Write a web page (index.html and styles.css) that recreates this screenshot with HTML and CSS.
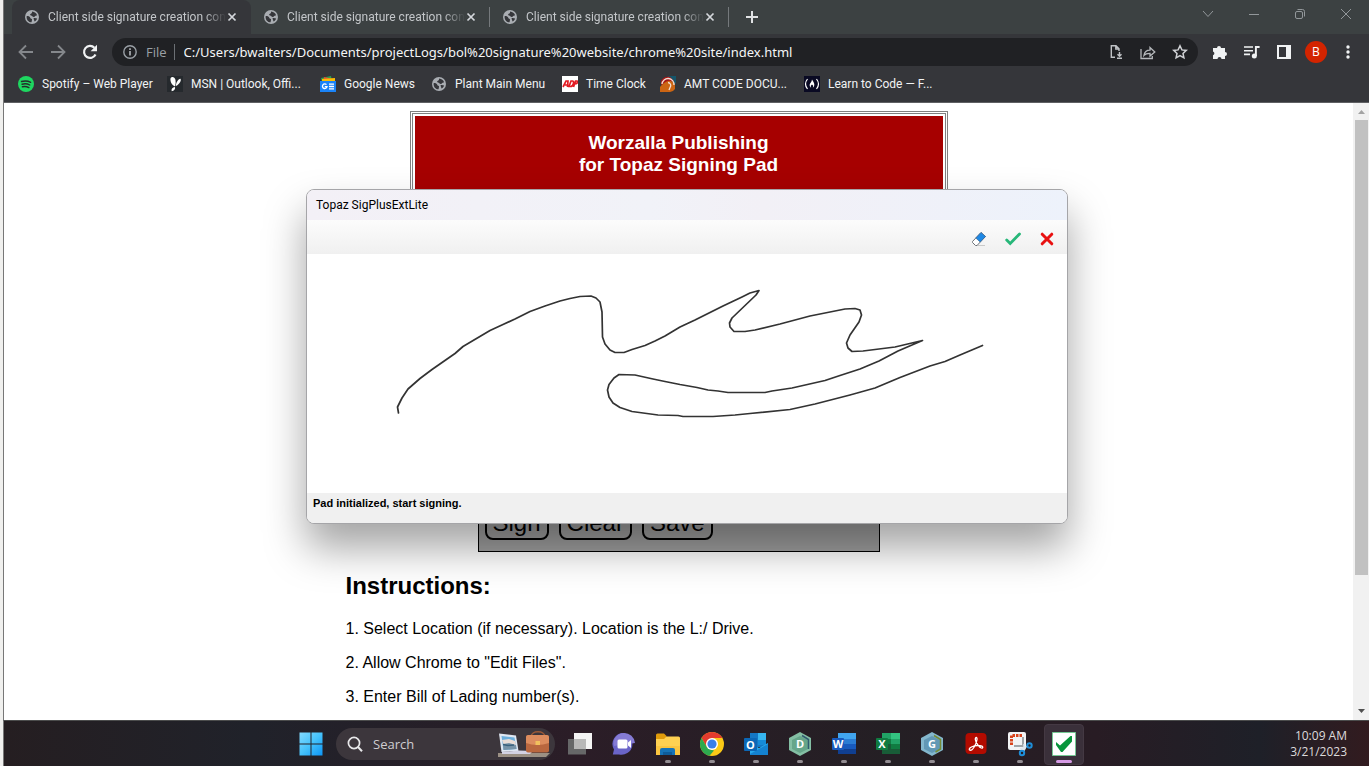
FILE: index.html
```html
<!DOCTYPE html>
<html lang="en">
<head>
<meta charset="utf-8">
<title>Client side signature creation con</title>
<link rel="stylesheet" href="styles.css">
</head>
<body>
<svg class="defs" aria-hidden="true">
  <symbol id="globe" viewBox="0 0 14 14"><circle cx="7" cy="7" r="7" fill="#a9adb2"/><path d="M1.600 6.200c1.200-.6 2.400-.2 3.200.7.6.8.4 1.500 1.500 1.800.9.300.9 1.200.500 2.100l-.200 1.500C3.500 12.300 1.400 9.800 1.600 6.200zM7.200 1.500c2.500.2 4.200 1.700 4.900 3.700-.9.500-1.900.4-2.400 1.300-.5.900-1.800.5-2.400-.2-.7-.8-2-.5-2.200-1.500-.1-.8 1-1 1.600-1.500.5-.5.100-1.200.5-1.800zM8.500 8.300c1.200-.4 2.500-.1 3.600.3-.4 1.300-1.300 2.300-2.500 2.900-.3-1-.9-2-1.100-3.200z" fill="#35363a"/></symbol>
  <symbol id="cross" viewBox="0 0 10 10"><path d="M1.500 1.500l7 7M8.500 1.500l-7 7" stroke="#d5d8dc" stroke-width="1.700" fill="none"/></symbol>
</svg>
<div class="desktop">
  <div class="browser">
    <div class="tabstrip">
      <div class="tab tab-active"><svg class="fav"><use href="#globe"/></svg><span class="tab-title">Client side signature creation con</span><button class="tab-close" aria-label="Close tab"><svg width="10" height="10"><use href="#cross"/></svg></button></div>
      <div class="tab"><svg class="fav"><use href="#globe"/></svg><span class="tab-title">Client side signature creation con</span><button class="tab-close" aria-label="Close tab"><svg width="10" height="10"><use href="#cross"/></svg></button></div>
      <div class="tab"><svg class="fav"><use href="#globe"/></svg><span class="tab-title">Client side signature creation con</span><button class="tab-close" aria-label="Close tab"><svg width="10" height="10"><use href="#cross"/></svg></button></div>
      <button class="new-tab" aria-label="New tab"><svg width="12" height="12" viewBox="0 0 12 12"><path d="M6 0v12M0 6h12" stroke="#e0e2e4" stroke-width="2"/></svg></button>
      <div class="window-controls">
        <button aria-label="Search tabs"><svg width="12" height="12" viewBox="0 0 12 12"><path d="M1 3l5 5.500L11 3"/></svg></button>
        <button aria-label="Minimize"><svg width="12" height="12" viewBox="0 0 12 12"><path d="M1 6.500h10"/></svg></button>
        <button aria-label="Restore"><svg width="12" height="12" viewBox="0 0 12 12"><rect x="1.500" y="3.500" width="7" height="7" rx="1.500"/><path d="M3.500 1.500h5a2 2 0 0 1 2 2v5"/></svg></button>
        <button aria-label="Close"><svg width="12" height="12" viewBox="0 0 12 12"><path d="M1 1l10 10M11 1L1 11"/></svg></button>
      </div>
    </div>

    <div class="toolbar">
      <button class="nav" aria-label="Back"><svg width="16" height="16" viewBox="0 0 16 16"><path d="M15 8H2M8 1.500L1.500 8 8 14.500" fill="none" stroke="#85888c" stroke-width="1.800"/></svg></button>
      <button class="nav" aria-label="Forward"><svg width="16" height="16" viewBox="0 0 16 16"><path d="M1 8h13M8 1.500L14.500 8 8 14.500" fill="none" stroke="#85888c" stroke-width="1.800"/></svg></button>
      <button class="nav" aria-label="Reload"><svg width="16" height="16" viewBox="0 0 16 16"><path d="M13.500 10.500A6 6 0 1 1 12.400 3.800" fill="none" stroke="#f1f3f4" stroke-width="2.200"/><path d="M15 .8v6.400H8.600z" fill="#f1f3f4"/></svg></button>
      <div class="omnibox">
        <svg width="14" height="14" viewBox="0 0 14 14"><circle cx="7" cy="7" r="6.200" fill="none" stroke="#9aa0a6" stroke-width="1.400"/><path d="M7 6v4.500M7 3.300v1.600" stroke="#b5b9bd" stroke-width="1.600"/></svg>
        <span class="scheme">File</span>
        <input class="url" type="text" aria-label="Address" value="C:/Users/bwalters/Documents/projectLogs/bol%20signature%20website/chrome%20site/index.html">
        <div class="omni-actions">
          <button aria-label="Install"><svg width="16" height="16" viewBox="0 0 16 16" fill="none" stroke="#c0c3c6" stroke-width="1.400"><path d="M7 13.300H3.300V1.700h4.700l3 3V7M7.800 1.700V5H11M11.500 8v4M9.500 10.300l2 1.900 2-1.900M9 14.300h5"/></svg></button>
          <button aria-label="Share"><svg width="16" height="16" viewBox="0 0 16 16" fill="none" stroke="#b5b8bb" stroke-width="1.300"><path d="M1 5v9.500h11.300V12M4 11.300c.5-3.500 2.300-5.100 6-5.100V3.500L14.800 8 10 12V9.300c-3 0-4.800.5-6 2z"/></svg></button>
          <button aria-label="Bookmark"><svg width="16" height="16" viewBox="0 0 16 16"><path d="M8 1.800l1.900 4.100 4.400.5-3.300 3 .9 4.400L8 11.600l-3.900 2.200.9-4.400-3.300-3 4.400-.5z" fill="none" stroke="#d0d2d5" stroke-width="1.500"/></svg></button>
        </div>
      </div>
      <div class="extensions">
        <button aria-label="Extensions"><svg width="16" height="16" viewBox="0 0 16 16"><path d="M1 4h4a2 2 0 1 1 4 0h4v4a2 2 0 1 1 0 4v3H9.500a2 2 0 0 0-4 0H1v-3.800a2 2 0 0 0 0-3.800z" fill="#f1f3f4"/></svg></button>
        <button aria-label="Media"><svg width="18" height="16" viewBox="0 0 18 16"><path d="M1 3h9M1 6.700h9M1 10.400h6" stroke="#f1f3f4" stroke-width="1.600"/><path d="M12.900 12V3h3.700" fill="none" stroke="#f1f3f4" stroke-width="1.900"/><circle cx="11.300" cy="12" r="2.500" fill="#f1f3f4"/></svg></button>
        <button aria-label="Side panel"><svg width="14" height="14" viewBox="0 0 14 14"><path fill-rule="evenodd" d="M0 0h14v14H0zM2 2v10h7V2z" fill="#f1f3f4"/></svg></button>
        <button class="avatar" aria-label="Profile">B</button>
        <button aria-label="Menu"><svg width="4" height="14" viewBox="0 0 4 14" fill="#f1f3f4"><circle cx="2" cy="2" r="1.700"/><circle cx="2" cy="7" r="1.700"/><circle cx="2" cy="12" r="1.700"/></svg></button>
      </div>
    </div>

    <nav class="bookmarks">
      <a href="#"><svg viewBox="0 0 16 16"><circle cx="8" cy="8" r="8" fill="#1ed760"/><path d="M3.500 5.500q5-1.400 9.200.8M4 8.200q4.300-1.100 7.800.8M4.400 10.800q3.500-.8 6.500.8" fill="none" stroke="#252c2a" stroke-width="1.400" stroke-linecap="round"/></svg>Spotify – Web Player</a>
      <a href="#"><svg viewBox="0 0 16 16"><path d="M0 0h16v16H0z" fill="#25292d"/><path d="M8 10.500C4.500 9 3 5 3.500 2.500 4.200.2 7.800.5 8.500 4q.6 3-.5 6.500zM8.800 10c.2-3.500 2.500-7.600 4.700-7.300 1.200 2-1.200 5.800-4.700 7.300zM8 11c.6 2-.9 3.700-3.300 4.300C4 13.400 5.200 11.300 8 11z" fill="#fff"/></svg>MSN | Outlook, Offi...</a>
      <a href="#"><svg viewBox="0 0 16 16"><path d="M1 2l10-2 1 6H2z" fill="#2ba24c"/><path d="M4 1l9 2v5H3z" fill="#ea4335"/><path d="M2 3l13-1v6H2z" fill="#fbbc04"/><path d="M0 5h16v11H0z" fill="#1a83f7"/><path d="M6.500 8.700A2.300 2.300 0 1 0 7 10.700H4.800M9 8.200h5M9 10.500h5M9 12.800h5" fill="none" stroke="#fff" stroke-width="1.300"/></svg>Google News</a>
      <a href="#"><svg viewBox="-1 -1 16 16"><use href="#globe" width="14" height="14"/></svg>Plant Main Menu</a>
      <a href="#"><svg viewBox="0 0 16 16"><path d="M0 0h16v16H0z" fill="#fff"/><path d="M1 11L4 5h2l-.5 6M3 9h3M7 10.500L9 5h1.500c2 0 1 5.500-2 5.500zM11.500 11l2-6H15c1.500 1 0 3-2.500 3" fill="none" stroke="#e31b23" stroke-width="1.700"/></svg>Time Clock</a>
      <a href="#"><svg viewBox="0 0 16 16"><path d="M8 0h8v8z" fill="#15556a"/><path d="M1 9V5c1-3 5-5 9-4l4 4z" fill="#a51717"/><path d="M0 11q4-5 8-6t7 4v4q-2 3-5 3H0z" fill="#cc6513"/><path d="M2 8a6 6 0 0 1 12 1M8 6.500a3 3 0 0 1 2 5l-1 2.500" fill="none" stroke="#f2dfd3" stroke-width="1.300"/></svg>AMT CODE DOCU...</a>
      <a href="#"><svg viewBox="0 0 16 16"><path d="M0 0h16v16H0z" fill="#0a0a23"/><path d="M3.500 3q-4 5 0 10M12.500 3q4 5 0 10" fill="none" stroke="#fff" stroke-width="1.200"/><path d="M8 3.500c1 2 2.300 3 2.300 5s-.8 2.800-1.500 3c.8-1.500.4-2-.8-3-1.200 1-1.600 1.500-.8 3-1-.2-1.700-1.300-1.500-3C6 7 7.700 6 8 3.500z" fill="#fff"/></svg>Learn to Code — F...</a>
    </nav>

    <div class="viewport">
      <main class="page">
        <header class="banner"><h1>Worzalla Publishing<br>for Topaz Signing Pad</h1></header>
        <section class="pad">
          <button>Sign</button>
          <button>Clear</button>
          <button>Save</button>
        </section>
        <section class="instructions">
          <h2>Instructions:</h2>
          <p>1. Select Location (if necessary). Location is the L:/ Drive.</p>
          <p>2. Allow Chrome to "Edit Files".</p>
          <p>3. Enter Bill of Lading number(s).</p>
        </section>
      </main>
      <div class="scrollbar">
        <svg width="7" height="4" viewBox="0 0 7 4"><path d="M0 4L3.500 0 7 4z" fill="#a3a3a3"/></svg>
        <div class="track"><div class="thumb"></div></div>
        <svg width="7" height="4" viewBox="0 0 7 4"><path d="M0 0h7L3.500 4z" fill="#505050"/></svg>
      </div>
    </div>
  </div>

  <section class="dialog" role="dialog" aria-label="Topaz SigPlusExtLite">
    <div class="dialog-title">Topaz SigPlusExtLite</div>
    <div class="dialog-tools">
      <button aria-label="Erase"><svg width="16" height="16" viewBox="0 0 16 16"><path d="M5 14.500h9" stroke="#c9c9c9"/><path d="M1.500 10.500L10 1.500l4.500 4-8.500 9H4.500l-3-3z" fill="#fff" stroke="#6b7076"/><path d="M4.800 7L10 1.500l4.500 4L9.200 11z" fill="#1e88e5" stroke="#3a6796" stroke-width=".7"/></svg></button>
      <button aria-label="Accept"><svg width="16" height="16" viewBox="0 0 16 16"><path d="M1.700 9l3.500 3.500L14.500 3" fill="none" stroke="#27b779" stroke-width="2.800" stroke-linecap="round"/></svg></button>
      <button aria-label="Cancel"><svg width="16" height="16" viewBox="0 0 16 16"><path d="M3.200 3.200l9.600 9.600M12.800 3.200l-9.600 9.600" stroke="#e81111" stroke-width="3" stroke-linecap="round"/></svg></button>
    </div>
    <svg class="signature" viewBox="307 254 760 239" role="img" aria-label="Signature"><polyline fill="none" stroke="#333" stroke-width="1.700" stroke-linejoin="round" stroke-linecap="round" points="398.500,413 397.500,407 402,398 408,389 420,378.500 432,369.500 455,353.500 463,346.500 490,330.500 503,324.500 515,319 530,311.500 545,306 560,301 570,298.500 580,296.500 591,296 596,298 600,302 602,312 602.500,337 605,344 610,350 615,352.500 624,352.500 632,349.500 645,345.500 655,341 665,336 680,327 695,320 723,306 742,297 750,293 759,290.500 756,295 732,318 729.500,323 730,327 734,331.500 745,331.500 755,330 780,324 810,316 845,309 855,308.500 860,310 861.500,315 859,322 850,335 846.500,343 848,348 852,351.500 863,351 895,347 922.500,340.500 898,351 879,361 860,369 840,375.500 825,380.500 792,388 772,391 765,392.500 728,392.500 718,391 708,390 697,387.500 680,384.500 665,381.500 653,379 635,375 619,374.500 614,378 609,384.500 607.500,390 609,397 613,403 620,407.500 632,411.500 658,415 678,415.500 683,416.500 713,416.500 735,415 750,413.500 790,409.500 815,404 850,395 875,388 900,377.500 930,366 945,361.500 960,355 982.500,345.500"/></svg>
    <div class="dialog-status">Pad initialized, start signing.</div>
  </section>

  <footer class="taskbar">
    <div class="apps">
      <button class="app" aria-label="Start"><svg width="24" height="24" viewBox="0 0 24 24"><defs><linearGradient id="w" gradientUnits="userSpaceOnUse" x1="0" y1="0" x2="24" y2="24"><stop stop-color="#86dcff"/><stop offset=".5" stop-color="#45c2fb"/><stop offset="1" stop-color="#0a93f5"/></linearGradient></defs><path d="M.5 .5h11v11H.5zM12.500 .5h11v11h-11zM.5 12.500h11v11H.5zM12.500 12.500h11v11h-11z" fill="url(#w)"/></svg></button>
      <label class="search">
        <svg width="16" height="16" viewBox="0 0 16 16"><circle cx="7" cy="7" r="5.600" fill="none" stroke="#e8e8ea" stroke-width="1.700"/><path d="M11 11l4 4.200" stroke="#e8e8ea" stroke-width="2"/></svg>
        <input type="text" placeholder="Search" aria-label="Search">
        <svg width="54" height="28" viewBox="0 0 54 28"><path d="M1 23h52l-4 4H1z" fill="#9b9084"/><path d="M2 3.500l17 2 2.500 15.500-17 1z" fill="#dfe7f2"/><path d="M4.500 6l13 1.500 2 11.500-13 1z" fill="#6caedb"/><path d="M5 10l7-1 6 2 1 4-12 1z" fill="#e9dcd6"/><path d="M6 14l6-1 7 2 .5 4-13 1z" fill="#7793a8"/><path d="M6 14.500l5 1 6-.5" fill="none" stroke="#39617d" stroke-width="1.500"/><path d="M5 22l17-1.500 14 .5-3 3H5z" fill="#d3d2e3"/><path d="M34 7c0-7 14-7 14 0" fill="none" stroke="#9c5a37" stroke-width="1.500"/><rect x="29" y="5.500" width="23" height="17" rx="2" fill="#b9673f"/><path d="M29 7q0-2 2-2h19q2 0 2 2v6q-12 4-23 0z" fill="#dc8c5e"/><rect x="38.500" y="11" width="4.500" height="4" fill="#f2c05d"/></svg>
      </label>
      <button class="app" aria-label="Task view"><svg width="24" height="24" viewBox="0 0 24 24"><path d="M6 1h18v16H6z" fill="#f4f4f4"/><path d="M0 7h18v15.500H0z" fill="#666768"/><path d="M6 7h12v10H6z" fill="#b8b8b8"/></svg></button>
      <button class="app" aria-label="Chat"><svg width="24" height="24" viewBox="0 0 24 24"><path d="M12 1A11 11 0 1 1 7 22.500H.8l1.200-5A11 11 0 0 1 12 1z" fill="#6a64c8"/><path d="M12 1a11 11 0 0 1 11 10L2 14C0 8 5 1 12 1z" fill="#857bd4"/><rect x="5.500" y="7.500" width="10" height="9" rx="1.500" fill="#fff"/><path d="M16 10.500l3-2.500v8l-3-2.500z" fill="#fff"/></svg></button>
      <button class="app running" aria-label="File Explorer"><svg width="24" height="24" viewBox="0 0 24 24"><path d="M0 5V3q0-1.500 1.500-1.500H8L10.500 4v4H0z" fill="#e09b0b"/><path d="M0 7h8l2.500-2.500h12Q24 4.500 24 6v17H0z" fill="#ffd152"/><path d="M0 14h24v9H0z" fill="#fbc540"/><path d="M4 23v-5q0-2 2-2h11q2 0 2 2v5z" fill="#1673b8"/><path d="M7 20h9v3H7z" fill="#0e5c9b"/></svg></button>
      <button class="app running" aria-label="Chrome"><svg width="24" height="24" viewBox="0 0 24 24"><circle cx="12" cy="12" r="12" fill="#fbc916"/><path d="M1.600 6A12 12 0 0 1 22.400 6H12L6.800 15z" fill="#e33b2e"/><path d="M1.600 6l5.200 9L12 18l2 .5-4.500 5.300A12 12 0 0 1 1.600 6z" fill="#2da94f"/><circle cx="12" cy="12" r="6" fill="#fff"/><circle cx="12" cy="12" r="4.600" fill="#397ee8"/></svg></button>
      <button class="app running" aria-label="Outlook"><svg width="24" height="24" viewBox="0 0 24 24"><path d="M6 1h16v14H6z" fill="#1477c4"/><path d="M14 1h8v7h-8z" fill="#36b5ef"/><path d="M14 8h8v5h-8z" fill="#168bd8"/><path d="M6 11l9 5 9-5v12H6z" fill="#28a8ea"/><path d="M6 22l18-10v11H6z" fill="#1482d1"/><rect y="6" width="13" height="13" rx="1" fill="#0b67b6"/><text x="6.500" y="16.500" class="glyph">O</text></svg></button>
      <button class="app running" aria-label="Designer"><svg width="24" height="24" viewBox="0 0 24 24"><path d="M12 0l11 6v12l-11 6-11-6V6z" fill="#84bfa4"/><path d="M12 4l8 4v9l-8 4-8-4V8z" fill="#66a68a"/><path d="M14 3.500l6.500 4V17" fill="none" stroke="#315b70" stroke-width="1.500"/><text x="12" y="16" class="glyph">D</text></svg></button>
      <button class="app running" aria-label="Word"><svg width="24" height="24" viewBox="0 0 24 24"><path d="M6 1h18v6H6z" fill="#41a5ee"/><path d="M6 7h18v5H6z" fill="#2b7cd3"/><path d="M6 12h18v5H6z" fill="#185abd"/><path d="M6 17h18v5H6z" fill="#103f91"/><rect y="6" width="12" height="12" rx="1" fill="#185abd"/><text x="6" y="16" class="glyph">W</text></svg></button>
      <button class="app running" aria-label="Excel"><svg width="24" height="24" viewBox="0 0 24 24"><path d="M6 1h18v21H6z" fill="#21a366"/><path d="M15 1h9v6h-9z" fill="#33c481"/><path d="M6 7h9v5H6z" fill="#107c41"/><path d="M6 12h9v10H6z" fill="#185c37"/><path d="M15 12h9v5h-9z" fill="#107c41"/><path d="M15 17h9v5h-9z" fill="#185c37"/><rect y="6" width="12" height="12" rx="1" fill="#107c41"/><text x="6" y="16" class="glyph">X</text></svg></button>
      <button class="app running" aria-label="G app"><svg width="24" height="24" viewBox="0 0 24 24"><path d="M12 0l11 6v12l-11 6-11-6V6z" fill="#84b7cd"/><path d="M12 4l8 4v9l-8 4-8-4V8z" fill="#6298b5"/><path d="M14 3.500l6.500 4V17l-5 3" fill="none" stroke="#758b35" stroke-width="1.500"/><text x="12" y="16" class="glyph">G</text></svg></button>
      <button class="app running" aria-label="Acrobat"><svg width="24" height="24" viewBox="0 0 24 24"><rect x="1.500" y="1" width="21" height="21" rx="4" fill="#b30b00"/><path d="M5.500 18c-1.500-2 4-4.500 8-4.500s6 1 5 2.300c-1.600 2-7-5-7.200-8.300-.1-2.700 2-2.700 1.700 0-.3 3.300-4.300 12.500-7.500 10.500z" fill="none" stroke="#fff" stroke-width="1.300"/></svg></button>
      <button class="app running" aria-label="Snipping Tool"><svg width="24" height="24" viewBox="0 0 24 24"><rect width="18" height="18" rx="2" fill="#f2f3f5"/><path d="M3.500 13V3.500H14" fill="none" stroke="#d9431b" stroke-width="3" stroke-dasharray="2.500 1"/><path d="M6 14h9V5" fill="none" stroke="#a0a4a8" stroke-width="2"/><path d="M12 17l8-3M16 12v7" stroke="#dce5ee" stroke-width="1.500"/><circle cx="21.500" cy="13.500" r="2.200" fill="none" stroke="#1e8ed8" stroke-width="2"/><circle cx="14" cy="21" r="2.200" fill="none" stroke="#1e8ed8" stroke-width="2"/></svg></button>
      <button class="app running current" aria-label="Topaz SigPlusExtLite"><svg width="24" height="24" viewBox="0 0 24 24"><path d="M.5 .5h23v23H.5z" fill="#fff" stroke="#75c994"/><path d="M4 10l4 3.500L18.500 4H20v5.500L10.500 20H9l-5-7z" fill="#07953b"/></svg></button>
    </div>
    <div class="clock"><time>10:09 AM</time><time>3/21/2023</time></div>
  </footer>
</div>
</body>
</html>
```

FILE: styles.css
```css
* { box-sizing: border-box; }

body {
  margin: 0;
  font: 12px/16px "Open Sans", "Noto Sans", sans-serif;
}

button {
  padding: 0;
  border: 0;
  background: none;
  color: inherit;
  font: inherit;
  display: flex;
  align-items: center;
  justify-content: center;
}

svg { flex: none; display: block; }
.defs { position: absolute; width: 0; height: 0; }

.desktop {
  position: relative;
  height: 100vh;
  display: flex;
  flex-direction: column;
  overflow: hidden;
  border-left: 3px solid #f0f0ee;
}

.browser {
  flex: 1;
  min-height: 0;
  display: flex;
  flex-direction: column;
  border-left: 1px solid #777;
  background: #35363a;
  color: #f1f3f4;
}

/* Tabs */
.tabstrip {
  flex: none;
  display: flex;
  height: 34px;
  padding-left: 8px;
  background: #3c4142;
}
.tab {
  position: relative;
  flex: 0 1 239px;
  min-width: 0;
  display: flex;
  align-items: center;
  gap: 9px;
  padding: 0 10px 0 13px;
  color: #c3c6c9;
  font-family: Roboto, "Open Sans", sans-serif;
}
.tab-active {
  background: #35363a;
  border-radius: 8px 8px 0 0;
}
.tab:not(.tab-active)::after {
  content: "";
  position: absolute;
  right: 0;
  top: 7px;
  width: 1px;
  height: 20px;
  background: #75797c;
}
.fav { width: 14px; height: 14px; }
.tab-title {
  flex: 1;
  white-space: nowrap;
  -webkit-mask-image: linear-gradient(90deg, #000 88%, transparent);
  mask-image: linear-gradient(90deg, #000 88%, transparent);
}
.tab-close { margin: 0 4px 0 -8px; }
.new-tab { width: 46px; }
.window-controls { margin-left: auto; display: flex; height: 28px; }
.window-controls button { width: 46px; }
.window-controls svg { fill: none; stroke: #92979a; }

/* Toolbar */
.toolbar {
  flex: none;
  display: flex;
  align-items: center;
  height: 36px;
  padding: 0 5px 0 6px;
}
.nav { width: 32px; height: 28px; }
.omnibox {
  flex: 1;
  display: flex;
  align-items: center;
  height: 28px;
  margin: 0 6px;
  padding: 0 2px 0 11px;
  border-radius: 14px;
  background: #202124;
}
.scheme {
  margin-left: 9px;
  padding-right: 7px;
  border-right: 1px solid #6c7074;
  color: #9aa0a6;
  font-size: 13px;
}
.url {
  flex: 1;
  min-width: 0;
  padding: 0 0 0 9px;
  border: 0;
  background: none;
  color: #f4f5f6;
  font: 13px/20px "Noto Sans", "Open Sans", sans-serif;
}
.omni-actions, .extensions { display: flex; }
.omni-actions button, .extensions button { width: 32px; height: 28px; }
.extensions .avatar {
  width: 22px;
  height: 22px;
  margin: 3px 5px;
  border-radius: 50%;
  background: #d32400;
  color: #fff;
}

/* Bookmarks */
.bookmarks {
  flex: none;
  display: grid;
  grid-template-columns: 149px 153px 111px 131px 98px 144px auto;
  align-items: center;
  height: 33px;
  padding: 0 14px 4px;
  border-bottom: 1px solid #5f6063;
  font-family: Roboto, "Open Sans", sans-serif;
}
.bookmarks a {
  display: flex;
  align-items: center;
  gap: 8px;
  color: inherit;
  text-decoration: none;
  white-space: nowrap;
}
.bookmarks svg { width: 16px; height: 16px; }

/* Page */
.viewport {
  flex: 1;
  min-height: 0;
  display: flex;
  background: #fff;
  color: #000;
}
.page {
  flex: 1;
  overflow: hidden;
  padding-top: 8px;
  font: 16px/18px "Liberation Sans", Arial, sans-serif;
}
.banner {
  max-width: 538px;
  height: 110px;
  margin: 0 auto;
  padding: 2px;
  border: 3px double #808080;
}
.banner h1 {
  height: 100%;
  margin: 0;
  padding-top: 16px;
  background: #a60000;
  color: #fff;
  font-size: 19px;
  line-height: 22px;
  text-align: center;
}
.pad {
  display: flex;
  align-items: flex-end;
  gap: 10px;
  max-width: 402px;
  height: 321px;
  margin: 10px auto 0;
  padding: 0 6px 11px;
  border: 1px solid #000;
  background: #a0a0a0;
}
.pad button {
  padding: 1px 6px;
  border: 2px solid #000;
  border-radius: 8px;
  font-size: 24px;
  line-height: 28px;
}
.instructions { max-width: 666px; margin: 0 auto; }
.instructions h2 { margin: 20px 0; font-size: 24px; line-height: 28px; }
.instructions p { margin: 0 0 16px; }

.scrollbar {
  flex: 0 0 16px;
  display: flex;
  flex-direction: column;
  align-items: center;
  gap: 6px;
  padding: 7px 0;
  background: #f1f1f1;
}
.track { flex: 1; width: 13px; }
.thumb { height: 78%; background: #c1c1c1; }

/* Signature window */
.dialog {
  position: absolute;
  left: 303px;
  top: 189px;
  width: 762px;
  border: 1px solid #a5a5a8;
  border-radius: 8px;
  overflow: hidden;
  background: #fff;
  box-shadow: 0 24px 42px rgba(0, 0, 0, .36);
}
.dialog-title {
  padding: 7px 9px;
  background: linear-gradient(90deg, #f3f0f6, #f1f2f8 45%, #f2f0f6 60%, #edf2fb);
  font-family: Roboto, "Open Sans", sans-serif;
}
.dialog-tools {
  display: flex;
  justify-content: flex-end;
  gap: 18px;
  padding: 11px 12px 7px;
  background: linear-gradient(#fcfcfc, #f0f0f0);
}
.signature { width: 100%; }
.dialog-status {
  padding: 2px 6px 12px;
  background: #f0f0f0;
  font: bold 11px/16px "Liberation Sans", Arial, sans-serif;
}

/* Taskbar */
.taskbar {
  flex: none;
  display: grid;
  grid-template-columns: 1fr auto 1fr;
  height: 46px;
  padding-left: 2px;
  border-left: 1px solid #777;
  border-top: 1px solid #4b4c4c;
  background: linear-gradient(90deg, #251e21, #20222a 18%, #2b1d27 42%, #241f24 65%, #281c24 80%, #1e2028 92%, #321b1f);
}
.apps {
  grid-column: 2;
  display: flex;
  align-items: center;
}
.app { position: relative; width: 44px; height: 45px; }
.app svg { overflow: visible; }
.running::after {
  content: "";
  position: absolute;
  bottom: 3px;
  left: 19px;
  width: 6px;
  height: 3px;
  border-radius: 2px;
  background: #928c91;
}
.current::before {
  content: "";
  position: absolute;
  inset: 3px 2px 1px;
  border: 1px solid #443943;
  border-radius: 4px;
  background: #3a303a;
}
.current svg { position: relative; }
.current::after { left: 14px; width: 16px; background: #d79be6; }
.glyph {
  fill: #fff;
  font: bold 11px "Open Sans", sans-serif;
  text-anchor: middle;
}
.search {
  display: flex;
  align-items: center;
  width: 219px;
  height: 32px;
  margin: 0 3px;
  padding: 0 4px 0 11px;
  border-radius: 16px;
  background: #3c363c;
}
.search input {
  flex: 1;
  min-width: 0;
  padding: 0 0 0 10px;
  border: 0;
  background: none;
  font: 13px/18px "Open Sans", "Noto Sans", sans-serif;
}
.search input::placeholder { color: #cfcdd0; opacity: 1; }
.clock {
  display: flex;
  flex-direction: column;
  align-items: flex-end;
  justify-content: center;
  padding-right: 22px;
  color: #dcdadb;
  font: 12px/16px "Open Sans", "Noto Sans", sans-serif;
}
```
